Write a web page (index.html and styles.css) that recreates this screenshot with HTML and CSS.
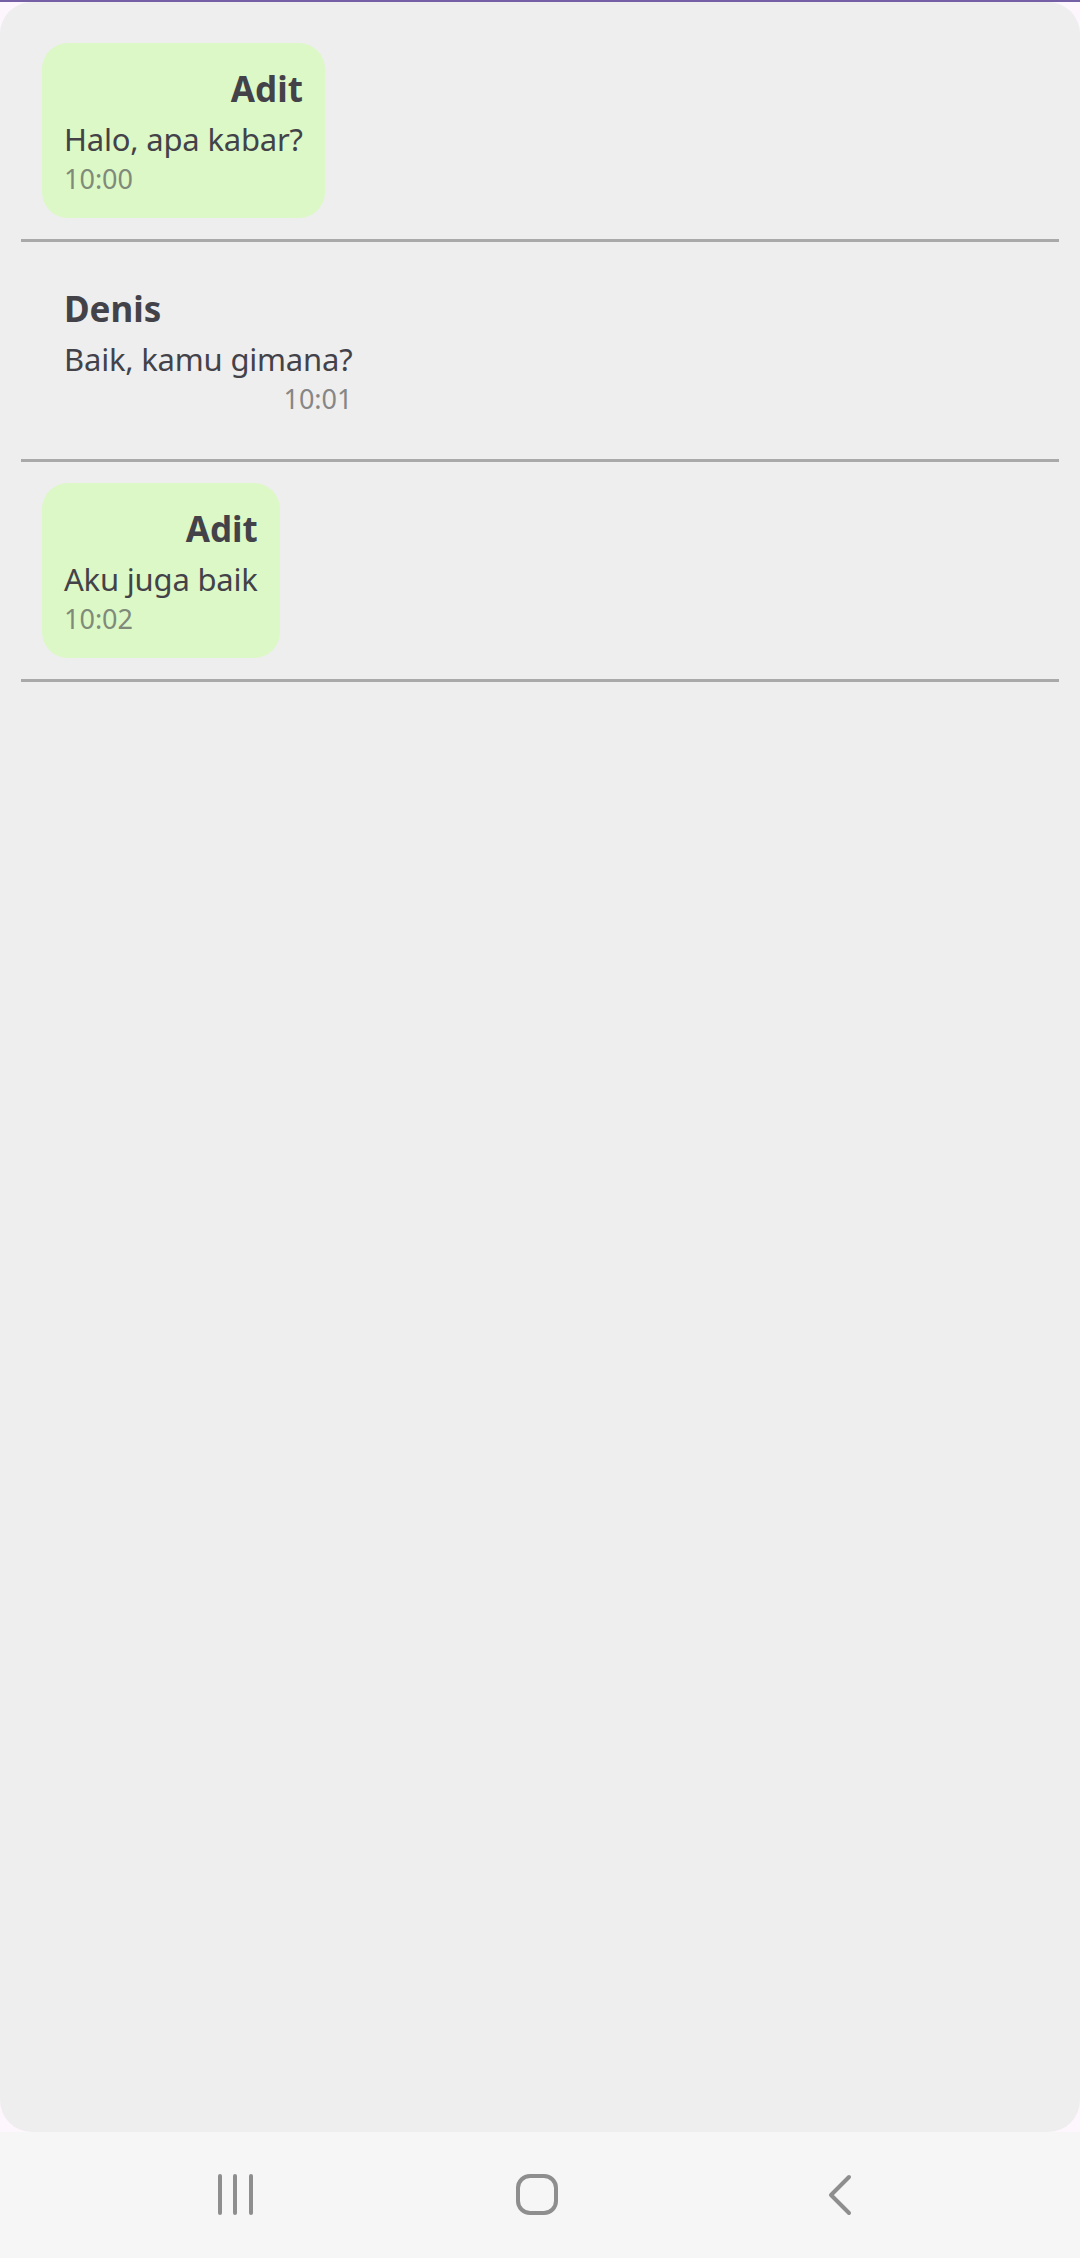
FILE: index.html
```html
<!DOCTYPE html>
<html>
<head>
<meta charset="utf-8">
<link rel="stylesheet" href="styles.css">
</head>
<body>
<div class="topline"></div>
<main class="screen">
  <div class="item">
    <div class="bubble mine">
      <div class="name">Adit</div>
      <div class="msg">Halo, apa kabar?</div>
      <div class="time">10:00</div>
    </div>
    <div class="sep"></div>
  </div>
  <div class="item">
    <div class="bubble other">
      <div class="name">Denis</div>
      <div class="msg">Baik, kamu gimana?</div>
      <div class="time">10:01</div>
    </div>
    <div class="sep"></div>
  </div>
  <div class="item">
    <div class="bubble mine">
      <div class="name">Adit</div>
      <div class="msg">Aku juga baik</div>
      <div class="time">10:02</div>
    </div>
    <div class="sep"></div>
  </div>
</main>
<nav class="navbar">
  <div class="navbtn">
    <svg width="44" height="44" viewBox="0 0 44 44"><g stroke="#8e8e8e" stroke-width="4" stroke-linecap="round"><line x1="7" y1="3" x2="7" y2="40"/><line x1="22" y1="3" x2="22" y2="40"/><line x1="38" y1="3" x2="38" y2="40"/></g></svg>
  </div>
  <div class="navbtn">
    <svg width="44" height="44" viewBox="0 0 44 44"><rect x="3" y="3" width="38" height="37" rx="12" fill="none" stroke="#8e8e8e" stroke-width="4"/></svg>
  </div>
  <div class="navbtn">
    <svg width="44" height="44" viewBox="0 0 44 44"><polyline points="32,4 14,22 32,40" fill="none" stroke="#8e8e8e" stroke-width="4" stroke-linecap="round" stroke-linejoin="round"/></svg>
  </div>
</nav>
</body>
</html>
```
FILE: styles.css
```css
html, body {
  margin: 0;
  padding: 0;
}
body {
  width: 1080px;
  height: 2258px;
  background: #fdf6fd;
  font-family: "Noto Sans", "Open Sans", sans-serif;
  color: #434249;
  overflow: hidden;
}
.topline {
  height: 2px;
  background: #7560a6;
}
.screen {
  box-sizing: border-box;
  height: 2130px;
  background: #eeeeee;
  border-radius: 32px;
  padding-top: 20px;
}
.item {
  padding: 21px 21px 0 21px;
}
.bubble {
  display: inline-flex;
  flex-direction: column;
  margin-left: 21px;
  padding: 21px 22px 0 22px;
  border-radius: 26px;
  box-sizing: border-box;
  height: 175px;
}
.bubble.mine {
  background: #dcf8c6;
}
.name {
  font-size: 35px;
  font-weight: 700;
  line-height: 50px;
}
.msg {
  font-size: 31px;
  line-height: 51px;
  letter-spacing: -0.2px;
}
.time {
  font-size: 27px;
  line-height: 28px;
  color: #868686;
}
.mine .name {
  text-align: right;
}
.mine .time {
  color: #7f8a7a;
  text-align: left;
}
.other .time {
  text-align: right;
}
.sep {
  height: 3px;
  background: #a9a9a9;
  margin-top: 21px;
}
.navbar {
  height: 126px;
  background: #f6f6f6;
  display: flex;
  align-items: center;
  justify-content: center;
  gap: 258px;
  padding-right: 6px;
}
.navbtn {
  width: 44px;
  height: 44px;
  display: flex;
}
```
